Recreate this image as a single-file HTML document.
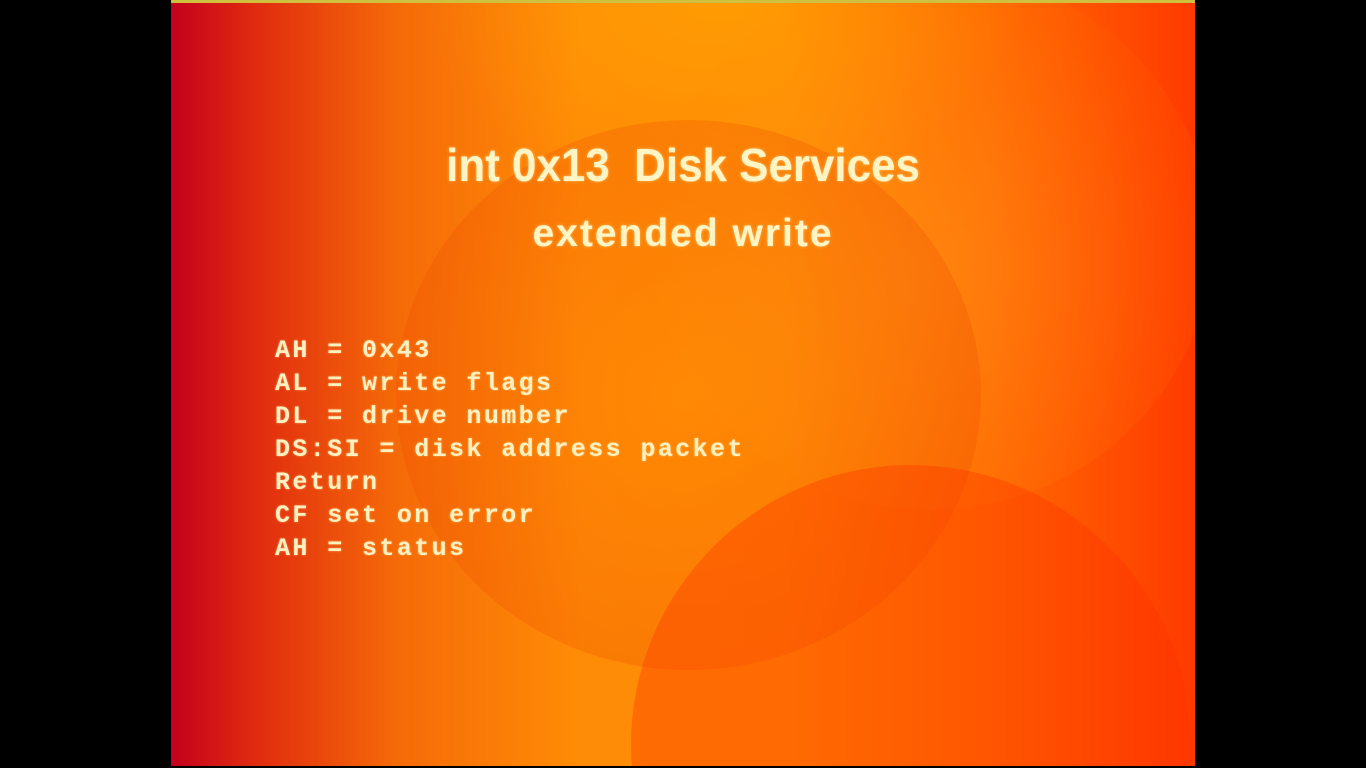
<!DOCTYPE html>
<html><head><meta charset="utf-8"><style>
html,body{margin:0;padding:0;width:1366px;height:768px;background:#000;overflow:hidden}
#slide{position:absolute;left:171px;top:0;width:1024px;height:766px;overflow:hidden;
background:linear-gradient(90deg,#c4001c 0%,#e02a10 8%,#f56a08 22%,#ff8c06 40%,#ff8a04 60%,#ff6a02 80%,#ff3a00 100%);}
.c{position:absolute;border-radius:50%}
#topglow{position:absolute;left:250px;top:-200px;width:600px;height:400px;border-radius:50%;
background:radial-gradient(ellipse at center,rgba(255,180,0,.4),rgba(255,170,0,0) 70%)}
.t{position:absolute;color:#fff4c4;font-family:"Liberation Sans",sans-serif;font-weight:bold;text-shadow:0 0 3px rgba(255,230,150,.6)}
.m{position:absolute;left:104px;color:#fff0c0;font-family:"Liberation Mono",monospace;font-weight:bold;font-size:25px;letter-spacing:2.4px;line-height:33px;text-shadow:0 0 2px rgba(255,230,150,.6)}
</style></head><body>
<div id="slide">
<div id="topglow"></div>
<div class="c" style="left:480px;top:-30px;width:560px;height:540px;background:radial-gradient(circle at 50% 55%,rgba(255,170,40,.3),rgba(255,140,0,.08) 70%)"></div>
<div class="c" style="left:225px;top:120px;width:585px;height:550px;background:radial-gradient(circle at 50% 50%,rgba(255,120,0,.15),rgba(235,70,0,.3) 90%);"></div>
<div class="c" style="left:460px;top:465px;width:560px;height:560px;background:rgba(255,50,0,.35)"></div>
<div style="position:absolute;left:0;top:0;width:1024px;height:3px;background:#d0c040"></div>
<div class="t" style="left:0;width:1024px;top:138px;text-align:center;font-size:46px;"><span style="display:inline-block;transform:scaleX(0.955);white-space:pre">int 0x13  Disk Services</span></div>
<div class="t" style="left:0;width:1024px;top:212px;text-align:center;font-size:39px;letter-spacing:2px">extended write</div>
<div class="m" style="top:334px">AH = 0x43<br>AL = write flags<br>DL = drive number<br>DS:SI = disk address packet<br>Return<br>CF set on error<br>AH = status</div>
</div>
</body></html>
